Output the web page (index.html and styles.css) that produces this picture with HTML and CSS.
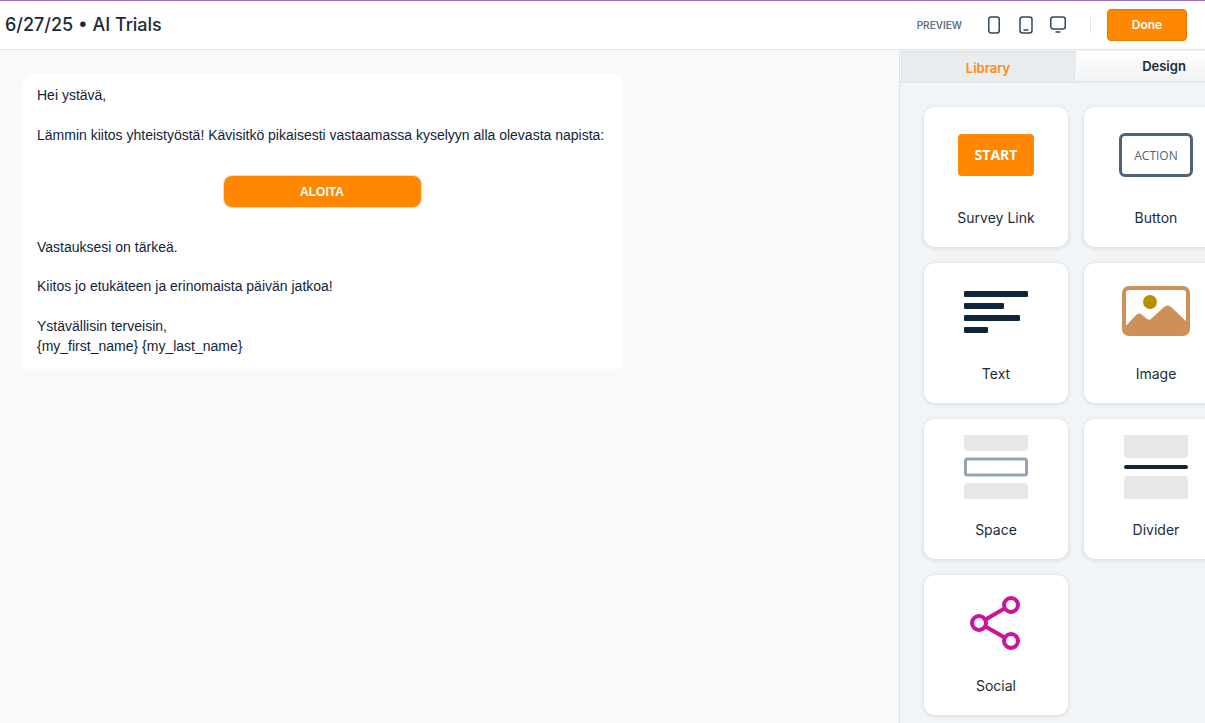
FILE: index.html
```html
<!DOCTYPE html>
<html lang="fi">
<head>
<meta charset="utf-8">
<title>AI Trials</title>
<link rel="stylesheet" href="styles.css">
</head>
<body>
<header class="topbar">
  <h1 class="title">6/27/25 • AI Trials</h1>
  <div class="actions">
    <span class="preview">PREVIEW</span>
    <svg class="dev dev-phone" width="14" height="18" viewBox="0 0 14 18"><rect x="1.75" y="1" width="10.5" height="16" rx="2.5"/></svg>
    <svg class="dev dev-tablet" width="14" height="18" viewBox="0 0 14 18"><rect x="1" y="1" width="12" height="16" rx="2.5"/><path d="M4.5 14h5"/></svg>
    <svg class="dev dev-desktop" width="18" height="18" viewBox="0 0 18 18"><rect x="1.75" y="1" width="14.5" height="12" rx="2.5"/><path d="M6.500 16h5"/></svg>
    <span class="sep"></span>
    <button class="done">Done</button>
  </div>
</header>
<div class="layout">
  <main class="canvas">
    <article class="email">
      <p>Hei ystävä,</p>
      <p class="gap">Lämmin kiitos yhteistyöstä! Kävisitkö pikaisesti vastaamassa kyselyyn alla olevasta napista:</p>
      <div class="cta-row"><a class="cta">ALOITA</a></div>
      <p>Vastauksesi on tärkeä.</p>
      <p class="gap-small">Kiitos jo etukäteen ja erinomaista päivän jatkoa!</p>
      <p class="gap">Ystävällisin terveisin,<br>{my_first_name} {my_last_name}</p>
    </article>
  </main>
  <aside class="side">
    <div class="tabs">
      <div class="tab tab-active">Library</div>
      <div class="tab">Design</div>
    </div>
    <div class="grid">
      <div class="card">
        <div class="slot"><div class="start">START</div></div>
        <div class="label">Survey Link</div>
      </div>
      <div class="card">
        <div class="slot"><div class="action">ACTION</div></div>
        <div class="label">Button</div>
      </div>
      <div class="card">
        <div class="slot">
          <svg width="64" height="42" viewBox="0 0 64 42" class="navy"><rect width="64" height="6" rx="1"/><rect y="12" width="40" height="6" rx="1"/><rect y="24" width="56" height="6" rx="1"/><rect y="36" width="24" height="6" rx="1"/></svg>
        </div>
        <div class="label">Text</div>
      </div>
      <div class="card">
        <div class="slot">
          <svg width="68" height="50" viewBox="0 0 68 50"><rect x="2" y="2" width="64" height="46" rx="5" fill="#fff" stroke="#cc9058" stroke-width="4"/><path d="M3 41 14 29Q16.500 26.500 19 28L25 33Q28 35 30 32L42 21Q46 18 49 21L65 36V46H3Z" fill="#cc9058"/><circle cx="28" cy="16" r="7" fill="#b88e00"/></svg>
        </div>
        <div class="label">Image</div>
      </div>
      <div class="card">
        <div class="slot">
          <svg width="64" height="64" viewBox="0 0 64 64"><path d="M0 0H64V12Q64 16 60 16H4Q0 16 0 12Z" fill="#e8e8e8"/><rect x="1.500" y="24" width="61" height="16" rx="2" fill="#fff" stroke="#97a4b1" stroke-width="3"/><path d="M4 48H60Q64 48 64 52V64H0V52Q0 48 4 48Z" fill="#e8e8e8"/></svg>
        </div>
        <div class="label">Space</div>
      </div>
      <div class="card">
        <div class="slot">
          <svg width="64" height="64" viewBox="0 0 64 64"><path d="M0 0H64V19Q64 23 60 23H4Q0 23 0 19Z" fill="#e8e8e8"/><rect y="30" width="64" height="4" rx="2" fill="#10263b"/><path d="M4 41H60Q64 41 64 45V64H0V45Q0 41 4 41Z" fill="#e8e8e8"/></svg>
        </div>
        <div class="label">Divider</div>
      </div>
      <div class="card">
        <div class="slot">
          <svg width="52" height="56" viewBox="0 0 52 56" fill="none" stroke="#c9149b" stroke-width="4" class="social"><circle cx="42" cy="10" r="7"/><circle cx="10" cy="28" r="7"/><circle cx="42" cy="46" r="7"/><path d="M16.500 24.500 35.500 13.500M16.500 31.500 35.500 42.500"/></svg>
        </div>
        <div class="label">Social</div>
      </div>
    </div>
  </aside>
</div>
</body>
</html>
```

FILE: styles.css
```css
* { box-sizing: border-box; }
html, body { height: 100%; }
body {
  margin: 0;
  overflow: hidden;
  display: flex;
  flex-direction: column;
  font-family: "Inter", "Liberation Sans", sans-serif;
  color: #1a2b3c;
  background: #f8f9fb;
}
.topbar {
  flex: none;
  height: 50px;
  display: flex;
  align-items: center;
  justify-content: space-between;
  background: #fff;
  border-top: 1px solid #9b6fc0;
  border-bottom: 1px solid #dfe2e6;
  padding: 0 18px 1px 5px;
}
.title {
  margin: 0;
  font-size: 18px;
  font-weight: 500;
  color: #1a2b3c;
}
.actions { display: flex; align-items: center; }
.preview {
  font-size: 10px;
  font-weight: 600;
  color: #65727f;
  margin-right: 25px;
}
.dev { fill: none; stroke: #33475b; stroke-width: 1.500; }
.dev-tablet { margin-left: 18px; }
.dev-desktop { margin-left: 16px; }
.sep {
  width: 1px;
  height: 16px;
  background: #e3e6e9;
  margin: 0 16px 0 23px;
}
.done {
  width: 80px;
  height: 32px;
  border: 1px solid #e67a00;
  border-radius: 4px;
  background: #ff8800;
  color: #fff;
  font: 600 12px "Inter", sans-serif;
  padding: 0;
}
.layout { flex: 1; display: flex; min-height: 0; }
.canvas { flex: 1; min-width: 0; padding: 24px 0 0 22px; }
.email {
  width: 600px;
  background: #fff;
  border-radius: 10px 10px 0 0;
  padding: 11px 15px 13px;
  font: 14px/20px "Liberation Sans", Arial, sans-serif;
  color: #14233a;
}
.email p { margin: 0; }
.email .gap { margin-top: 20px; }
.email .gap-small { margin-top: 19px; }
.cta-row { display: flex; justify-content: center; margin: 30px 0 29px; }
.cta {
  width: 199px;
  height: 33px;
  display: flex;
  align-items: center;
  justify-content: center;
  border: 1px solid #e8dccb;
  border-radius: 9px;
  background: #ff8800;
  color: #fff;
  font-size: 12px;
  font-weight: 700;
}
.side {
  flex: none;
  width: 306px;
  overflow: hidden;
  background: #f2f5f7;
  border-left: 1px solid #dfe2e6;
}
.tabs {
  display: flex;
  gap: 2px;
  width: 352px;
  height: 33px;
  padding: 1px 0 0 1px;
  border-bottom: 2px solid #e3e7ea;
}
.tab {
  width: 174px;
  display: flex;
  align-items: center;
  justify-content: center;
  font-size: 13px;
  font-weight: 600;
  color: #1a2b3c;
  background: linear-gradient(#fff, #f0f2f3);
}
.tab-active {
  color: #ff8a14;
  background: #e9edf0;
  border: 2px solid #e1e5e8;
  border-width: 2px 1px 0;
  padding-top: 1px;
}
.grid {
  display: grid;
  grid-template-columns: 144px 144px;
  gap: 16px;
  padding: 24px 0 0 24px;
}
.card {
  height: 140px;
  background: #fff;
  border-radius: 11px;
  box-shadow: 0 1px 4px rgba(40, 50, 60, .16);
  padding-top: 16px;
}
.slot {
  height: 64px;
  display: flex;
  align-items: center;
  justify-content: center;
}
.start {
  width: 76px;
  height: 42px;
  padding-bottom: 2px;
  display: flex;
  align-items: center;
  justify-content: center;
  border-radius: 4px;
  background: #ff8800;
  color: #fff;
  font: 700 14px "Open Sans", sans-serif;
}
.action {
  width: 74px;
  height: 44px;
  display: flex;
  align-items: center;
  justify-content: center;
  border: 3px solid #4f6375;
  border-radius: 6px;
  color: #4f6375;
  font: 500 12px "Open Sans", sans-serif;
}
.navy { fill: #10263b; transform: translateY(1px); }
.social { transform: translateX(-1px); }
.label {
  margin-top: 21px;
  text-align: center;
  font-size: 14px;
  line-height: 20px;
  color: #1a2b3c;
}
```
